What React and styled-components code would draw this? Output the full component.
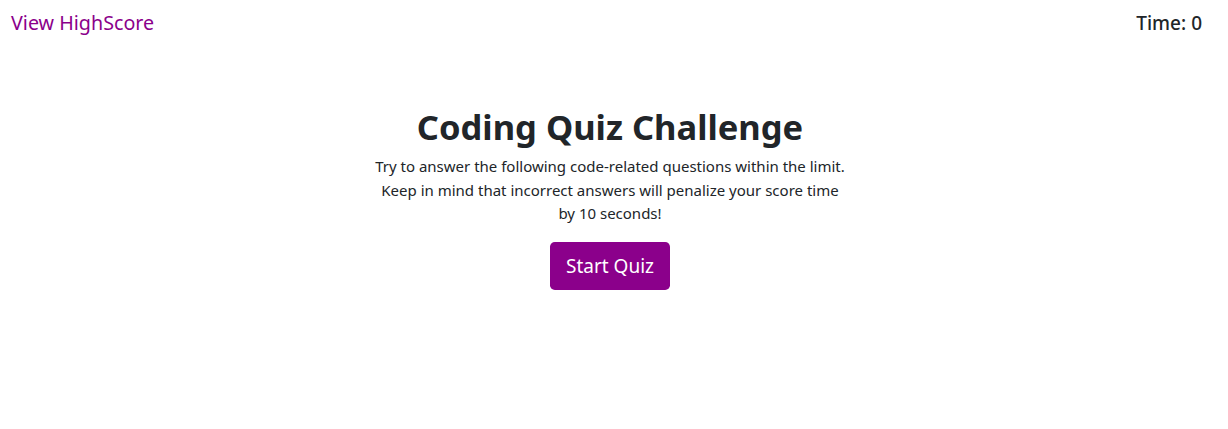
import React from "react";
import styled, { createGlobalStyle } from "styled-components";

const GlobalStyle = createGlobalStyle`
  body {
    margin: 0;
    background: #fff;
    color: #212529;
    font-family: "Noto Sans", "Open Sans", sans-serif;
    font-size: 16px;
    line-height: 1.5;
  }
`;

const Header = styled.header`
  display: flex;
  justify-content: space-between;
  align-items: center;
  padding: 8px 26px 0 11px;
  height: 38px;
  box-sizing: border-box;
`;

const HighScoreLink = styled.a`
  color: #8b008b;
  font-size: 19.7px;
  text-decoration: none;
  cursor: pointer;
`;

const Timer = styled.span`
  font-size: 19px;
  font-weight: 500;
  color: #212529;
`;

const Main = styled.main`
  display: flex;
  flex-direction: column;
  align-items: center;
  padding: 68px 8px 0 0;
`;

const Title = styled.h1`
  margin: 0 0 7px;
  font-size: 34.5px;
  font-weight: 700;
  line-height: 42px;
`;

const Intro = styled.p`
  margin: 0 0 16px;
  max-width: 500px;
  text-align: center;
  font-size: 15px;
  line-height: 23.5px;
`;

const StartButton = styled.button`
  background: #8b008b;
  color: #fff;
  border: none;
  border-radius: 4.8px;
  padding: 8px 16px;
  font-family: inherit;
  font-size: 19px;
  line-height: 32px;
  width: 120px;
  height: 48px;
  cursor: pointer;
`;

export default function App() {
  return (
    <>
      <GlobalStyle />
      <Header>
        <HighScoreLink>View HighScore</HighScoreLink>
        <Timer>Time: 0</Timer>
      </Header>
      <Main>
        <Title>Coding Quiz Challenge</Title>
        <Intro>
          Try to answer the following code-related questions within the limit.
          Keep in mind that incorrect answers will penalize your score time
          <br />
          by 10 seconds!
        </Intro>
        <StartButton>Start Quiz</StartButton>
      </Main>
    </>
  );
}
